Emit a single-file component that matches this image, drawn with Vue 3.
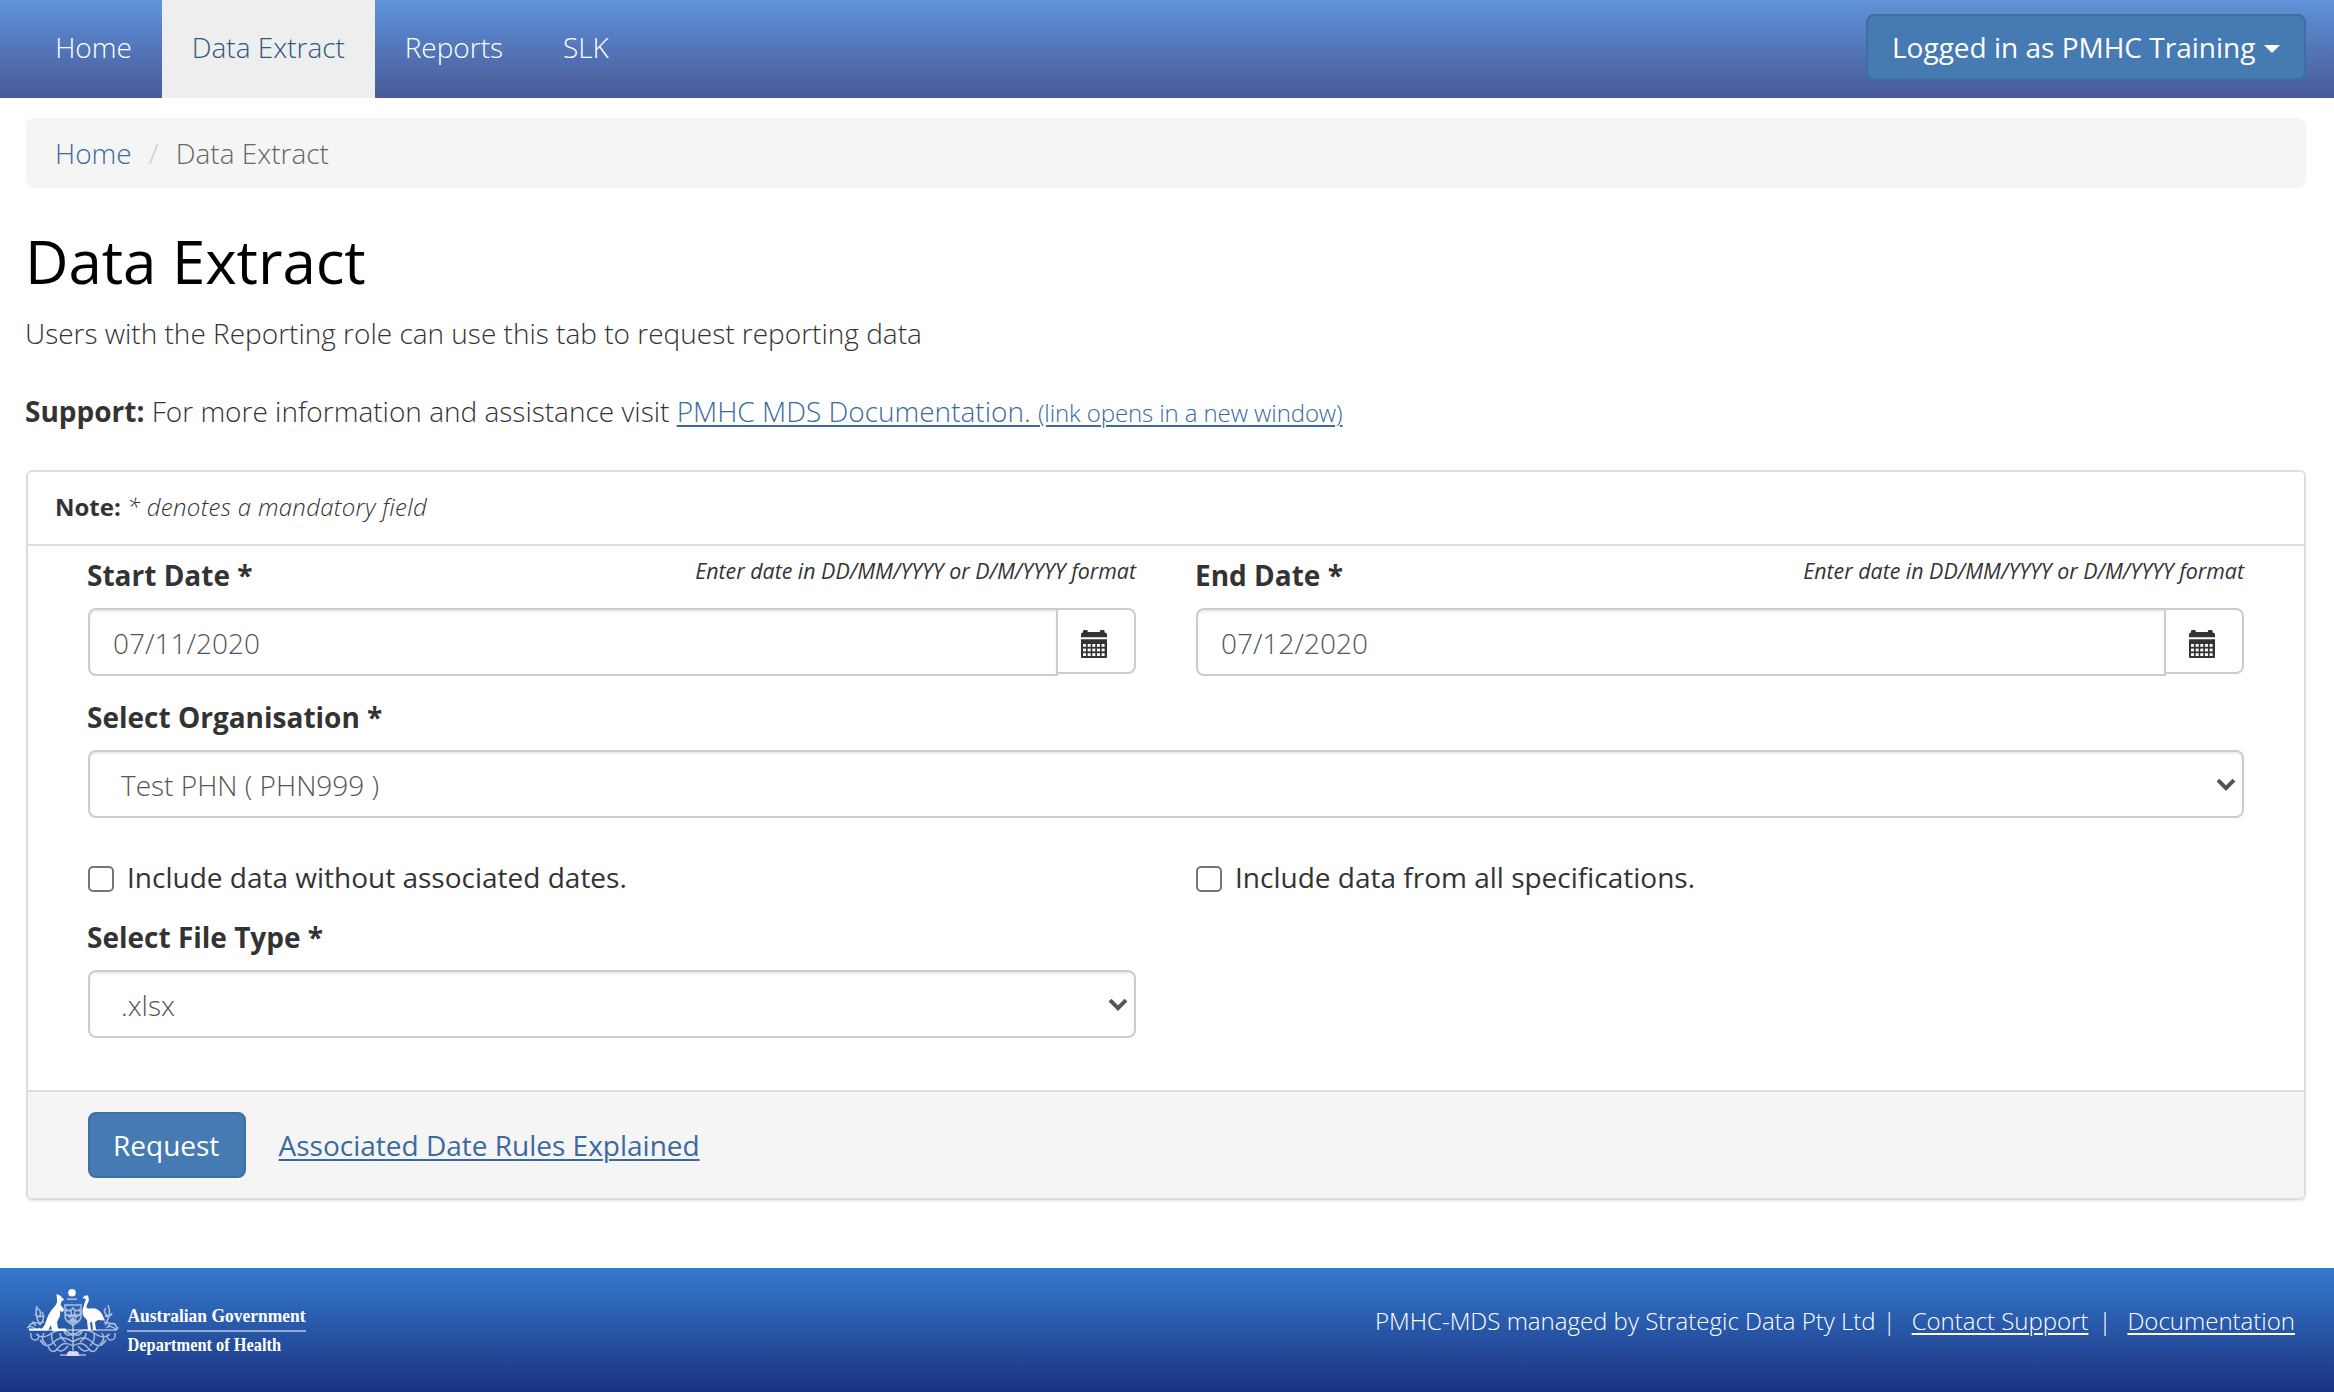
<script setup>
const navItems = [
  { label: 'Home' },
  { label: 'Data Extract', active: true },
  { label: 'Reports' },
  { label: 'SLK' },
]
const dates = [
  { label: 'Start Date *', value: '07/11/2020' },
  { label: 'End Date *', value: '07/12/2020' },
]
const options = ['Include data without associated dates.', 'Include data from all specifications.']

// day squares of the calendar icon
const cells = []
for (let r = 0; r < 3; r++) {
  for (let c = 0; c < 5; c++) cells.push({ x: 2 + c * 4.65, y: 14 + r * 4.6 })
}
</script>

<template>
  <div class="page">
    <nav class="navbar">
      <a v-for="n in navItems" :key="n.label" class="nav-item" :class="{ active: n.active }">{{ n.label }}</a>
      <button class="btn user">Logged in as PMHC Training<i class="caret"></i></button>
    </nav>

    <div class="crumbs"><a class="home">Home</a><span class="slash">/</span><span class="here">Data Extract</span></div>

    <h1>Data Extract</h1>
    <p class="lead">Users with the Reporting role can use this tab to request reporting data</p>
    <p class="support"><b>Support:</b> For more information and assistance visit <a>PMHC MDS Documentation. <small>(link opens in a new window)</small></a></p>

    <section class="panel">
      <header class="panel-head"><b>Note:</b> <em>* denotes a mandatory field</em></header>
      <div class="panel-body">
        <div class="columns">
          <div v-for="d in dates" :key="d.label" class="field">
            <div class="label-row">
              <label>{{ d.label }}</label>
              <em class="hint">Enter date in DD/MM/YYYY or D/M/YYYY format</em>
            </div>
            <div class="group">
              <div class="control date">{{ d.value }}</div>
              <div class="addon">
                <svg width="26" height="28" viewBox="0 0 26 28">
                  <path fill="#333" d="M0 7.2V4.6Q0 2.6 2 2.6V1.4Q2 0 3.4 0H5.4Q6.8 0 6.8 1.4V2H18.8V1.4Q18.8 0 20.2 0H22.2Q23.600 0 23.600 1.400V2.600Q26 2.600 26 4.600V7.200Z" />
                  <path fill="#333" d="M0 9.200H26V27Q26 28 25 28H1Q0 28 0 27Z" />
                  <rect v-for="(c, i) in cells" :key="i" :x="c.x" :y="c.y" width="3" height="2.800" fill="#fff" />
                </svg>
              </div>
            </div>
          </div>
        </div>

        <div class="field org">
          <div class="label-row"><label>Select Organisation *</label></div>
          <div class="control select">
            <span>Test PHN ( PHN999 )</span>
            <svg class="chev" width="20" height="14" viewBox="0 0 20 14"><path d="M2 2.200L10 10.200L18 2.200" fill="none" stroke="#555" stroke-width="4" /></svg>
          </div>
        </div>

        <div class="columns checks">
          <div v-for="o in options" :key="o" class="check"><i class="box"></i><span>{{ o }}</span></div>
        </div>

        <div class="columns">
          <div class="field">
            <div class="label-row"><label>Select File Type *</label></div>
            <div class="control select">
              <span>.xlsx</span>
              <svg class="chev" width="20" height="14" viewBox="0 0 20 14"><path d="M2 2.200L10 10.200L18 2.200" fill="none" stroke="#555" stroke-width="4" /></svg>
            </div>
          </div>
          <div class="field"></div>
        </div>
      </div>
      <footer class="panel-foot">
        <button class="btn">Request</button>
        <a>Associated Date Rules Explained</a>
      </footer>
    </section>

    <footer class="footer">
      <svg class="logo" width="320" height="80" viewBox="0 0 320 80">
        <g class="crest">
          <circle cx="46" cy="4.800" r="3.800" fill="#fff" />
          <path d="M41 11.200H51" class="thin" />
          <!-- kangaroo -->
          <path fill="#fff" d="M30.500 6L34 7.500L38 11.500L35.500 13.500L34.500 17L38 21L37 24L34 23L34 28L31 34L32 40.500H40V43H26L25 37L22 42.500H3V40.500H16C20 37 20 31 23 26C26 20 32 17 31 12Z" />
          <!-- emu -->
          <path fill="#fff" d="M56.500 10L59 7.500H62L63 12L60.500 18Q60 21 64 20.500Q72 19.500 76 26L79 32.500L72 32L69 34L70 42H67L66 34L64 34.500L65 42H62L61 32Q54.500 27 57 20L60 11Z" />
          <!-- shield -->
          <path class="thin" d="M39 17H55V29Q54 34 47 37Q40 34 39 29ZM40 21Q44 25 47 20Q50 25 54 21M39 27H55M43 30Q47 26 51 30M42 22A3 3 0 1 0 43 22M51 22A3 3 0 1 0 52 22" />
          <path d="M42 33L47 29L52 33L47 36Z" fill="#fff" opacity=".6" />
          <!-- wattle -->
          <path class="thin" d="M3 42H91M10 38Q6 32 2 40M14 37Q8 26 11 18M14 37Q20 30 16 24M9 26Q12 30 17 28M6 34Q12 36 18 34M10 20Q16 22 14 28M82 38Q88 32 91 40M79 37Q86 26 82 17M79 28Q84 30 86 25M78 34Q86 36 90 36M80 20Q76 24 82 28M1 40Q4 37 8 40T14 40M80 40Q84 37 88 40T92 39" />
          <path class="thin" d="M47 37V66M47 48Q36 38 26 45T10 46M47 48Q58 38 68 45T84 46M47 54Q36 46 28 54T14 52M47 54Q58 46 66 54T80 52M47 58Q38 52 32 60T22 58M47 58Q56 52 62 60T72 58M5 45Q4 52 9 52T12 46M89 45Q90 52 85 52T82 46M18 45Q14 52 20 56M76 45Q80 52 74 56M26 45Q24 52 30 58M68 45Q70 52 64 58M34 45Q34 50 40 54M60 45Q60 50 54 54M30 61Q36 66 42 58M64 61Q58 66 52 58M38 44Q42 50 47 45Q52 50 56 44" />
          <path fill="#fff" d="M40 68Q42 61 47 64Q52 61 54 68Z" opacity=".8" />
          <path d="M34 67H40M54 67H60" class="thin" />
        </g>
        <text x="101.500" y="33.500" textLength="178" lengthAdjust="spacingAndGlyphs">Australian Government</text>
        <rect x="101" y="42" width="179" height="2" fill="#fff" opacity=".5" />
        <text x="101.500" y="63" textLength="153.500" lengthAdjust="spacingAndGlyphs">Department of Health</text>
      </svg>
      <div class="links"><span>PMHC-MDS managed by Strategic Data Pty Ltd</span><span class="bar b1">|</span><a>Contact Support</a><span class="bar b2">|</span><a>Documentation</a></div>
    </footer>
  </div>
</template>

<style>
body { margin: 0; background: #fff; }
</style>
<style scoped>
.page { display: flex; flex-direction: column; height: 1392px; font: 300 28px/40px "Open Sans", sans-serif; color: #333; }
.page * { box-sizing: border-box; }
.page > * { flex-shrink: 0; }
a { color: #3a6a9f; white-space: nowrap; }
b, label { font-weight: 700; }
.navbar { display: flex; height: 98px; padding: 0 28px 0 25.200px; background: linear-gradient(#6094d8, #577fc4 33%, #485a98); }
.nav-item { padding: 27px 29.800px 31px 30px; color: #fff; }
.nav-item.active { background: #eee; color: #30587f; }
.btn { height: 66px; padding: 11px 25px 11px 23px; border: 2px solid #3f6ea3; border-radius: 8px; background: #457ab2; color: #fff; font: 400 28px/40px "Open Sans", sans-serif; white-space: nowrap; }
.user { display: flex; align-items: center; width: 440px; margin: 14px 0 0 auto; padding: 11px 23px 11px 24px; }
.caret { margin: 4px 0 0 9px; border: 8px solid transparent; border-top-color: #fff; border-bottom: 0; }
.crumbs { display: flex; height: 70px; margin: 20px 28px 0 26px; padding: 15px 29px; background: #f5f5f5; border-radius: 8px; }
.slash { margin: 0 17.500px 0 17px; color: #ccc; }
.here { color: #666; }
h1 { margin: 39px 25px 0; font: 400 60px/68px "Open Sans", sans-serif; color: #000; letter-spacing: -.05px; }
p { margin: 0 25px; }
.lead { margin-top: 18px; }
.support { height: 40px; margin-top: 38px; }
.support a { text-decoration: underline; text-decoration-thickness: 2px; text-underline-offset: 3px; }
small { font-size: 24px; line-height: 1; letter-spacing: -.1px; }
.panel { height: 730px; margin: 39px 28px 0 26px; border: 2px solid #ddd; border-radius: 6px; box-shadow: 0 2px 2px rgba(0, 0, 0, .06); }
.panel-head { height: 74px; padding: 18px 27px; border-bottom: 2px solid #ddd; font-size: 24px; line-height: 34px; }
.panel-head em { letter-spacing: .3px; }
.panel-body { height: 544px; padding: 9px 60px 0; }
.columns { display: flex; gap: 60px; }
.columns > div { flex: 1; }
.label-row { display: flex; justify-content: space-between; height: 40px; margin: 0 0 13px -1px; }
.hint { margin-top: 3px; font: italic 400 21.370px/26px "Open Sans", sans-serif; }
.group { display: flex; align-items: flex-start; }
.control { height: 68px; padding: 13px 23px; border: 2px solid #ccc; border-radius: 8px; box-shadow: inset 0 2px 2px rgba(0, 0, 0, .075); color: #555; }
.date { flex: 1; border-radius: 8px 0 0 8px; }
.addon { display: flex; width: 78px; height: 66px; padding: 20px 0 0 23px; border: 2px solid #ccc; border-left: 0; border-radius: 0 8px 8px 0; }
.org { margin-top: 21px; }
.select { display: flex; justify-content: space-between; padding: 13px 6px 0 31px; }
.chev { margin-top: 13px; }
.checks { margin: 39px 0 20px; }
.check { display: flex; font-weight: 400; }
.box { width: 26px; height: 26px; margin: 9px 13px 0 0; border: 2px solid #767676; border-radius: 5px; }
.panel-foot { display: flex; height: 108px; padding: 20px 60px; border-top: 2px solid #ddd; background: #f5f5f5; font-weight: 400; border-radius: 0 0 4px 4px; }
.panel-foot .btn { width: 158px; }
.panel-foot a { margin: 13px 0 0 32.500px; text-decoration: underline; text-decoration-thickness: 2px; text-underline-offset: 3px; }
.footer { display: flex; justify-content: space-between; height: 124px; margin-top: 68px; padding: 20px 39px 0 26px; background: linear-gradient(#367acd, #2b5fb0 38%, #1b3280); color: #fff; }
.crest { filter: blur(.4px); }
.thin { fill: none; stroke: #fff; stroke-width: 1.500; opacity: .6; }
.logo text { fill: #fff; font: 700 19px "Liberation Serif", serif; }
.links { display: flex; height: 34px; margin-top: 16px; font-size: 24px; line-height: 34px; }
.links a { color: #fff; text-decoration: underline; text-decoration-thickness: 2px; text-underline-offset: 3px; }
.links .b1 { margin: 0 16px 0 7px; }
.links .b2 { margin: 0 16px 0 10px; }
</style>
